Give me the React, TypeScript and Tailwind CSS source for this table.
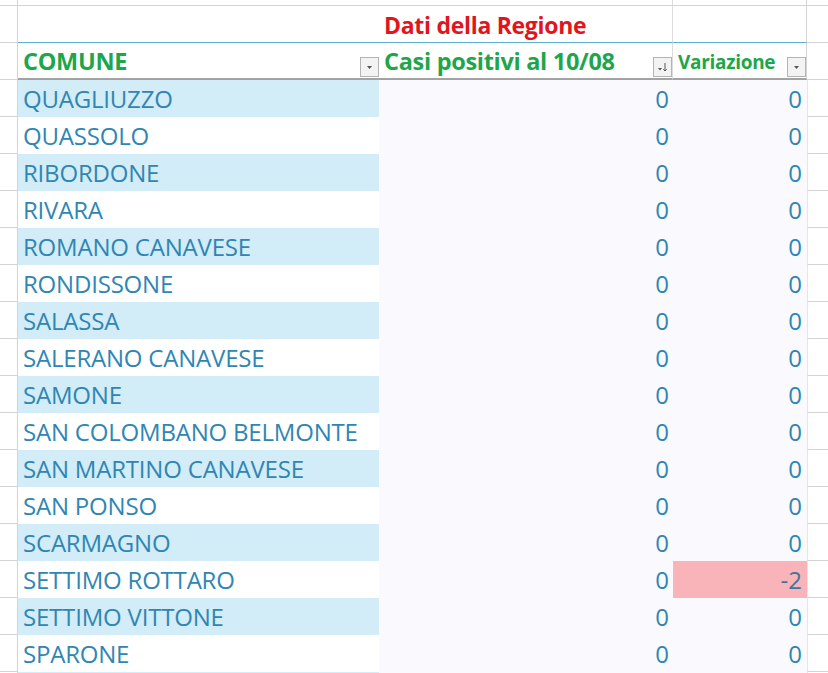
import React from "react";

const comuni = [
  "QUAGLIUZZO",
  "QUASSOLO",
  "RIBORDONE",
  "RIVARA",
  "ROMANO CANAVESE",
  "RONDISSONE",
  "SALASSA",
  "SALERANO CANAVESE",
  "SAMONE",
  "SAN COLOMBANO BELMONTE",
  "SAN MARTINO CANAVESE",
  "SAN PONSO",
  "SCARMAGNO",
  "SETTIMO ROTTARO",
  "SETTIMO VITTONE",
  "SPARONE",
];

const variazioni: Record<string, number> = { "SETTIMO ROTTARO": -2 };

function FilterButton({ sort }: { sort?: boolean }) {
  return (
    <div className="self-end w-[19px] h-[20px] mb-[1px] border border-[#b4b4b4] bg-[#f3f3f3] flex items-center justify-center shrink-0">
      <svg width="13" height="12" viewBox="0 0 13 12">
        {sort ? (
          <>
            <path d="M2 7h4l-2 2.5z" fill="#555" />
            <path d="M9 2v8M7.3 8.3L9 10l1.7-1.7" stroke="#555" strokeWidth="1" fill="none" />
          </>
        ) : (
          <path d="M4 5h5l-2.5 3z" fill="#555" />
        )}
      </svg>
    </div>
  );
}

export default function App() {
  return (
    <div className="w-[828px] h-[673px] overflow-hidden bg-white" style={{ fontFamily: '"Open Sans", "Noto Sans", sans-serif' }}>
      {/* strip above row 1 */}
      <div className="flex h-[6px] border-b border-[#d4d4d4]">
        <div className="w-[18px] border-r border-[#d4d4d4]" />
        <div className="w-[361px]" />
        <div className="w-[294px] border-r border-[#dcdcdc]" />
        <div className="w-[134px] border-r border-[#d4d4d4]" />
        <div className="flex-1" />
      </div>

      {/* row 1 - region title */}
      <div className="flex h-[37px]">
        <div className="w-[18px] border-r border-b border-[#d4d4d4]" />
        <div className="w-[361px] border-b border-[#5eb0d0]" />
        <div className="w-[294px] border-r border-[#dcdcdc] border-b border-b-[#5eb0d0] flex items-center pl-[5px] pt-[3px]">
          <span className="text-[23px] font-bold text-[#e3141b] tracking-[-0.3px]">Dati della Regione</span>
        </div>
        <div className="w-[134px] border-r border-[#d4d4d4] border-b border-b-[#5eb0d0]" />
        <div className="flex-1 border-b border-[#d4d4d4]" />
      </div>

      {/* row 2 - header */}
      <div className="flex h-[37px]">
        <div className="w-[18px] border-r border-b border-[#d4d4d4]" />
        <div className="w-[361px] border-b-2 border-[#a3a3a3] flex items-center justify-between pl-[5px]">
          <span className="text-[23.5px] font-bold text-[#1ea64b] tracking-[-0.3px] leading-none mt-[2px]">COMUNE</span>
          <FilterButton />
        </div>
        <div className="w-[294px] border-r border-[#dcdcdc] border-b-2 border-b-[#a3a3a3] flex items-center justify-between pl-[5px]">
          <span className="text-[23.5px] font-bold text-[#1ea64b] tracking-[-0.3px] leading-none mt-[2px]">Casi positivi al 10/08</span>
          <FilterButton sort />
        </div>
        <div className="w-[134px] border-r border-[#d4d4d4] border-b-2 border-b-[#a3a3a3] flex items-center justify-between pl-[5px]">
          <span className="text-[19px] font-bold text-[#1ea64b] tracking-[-0.3px] leading-none mt-[4px]">Variazione</span>
          <FilterButton />
        </div>
        <div className="flex-1 border-b border-[#d4d4d4]" />
      </div>

      {/* data rows */}
      {comuni.map((c, i) => {
        const v = variazioni[c] ?? 0;
        return (
          <div key={c} className="flex h-[37px] text-[24px] text-[#2f86b3]">
            <div className="w-[18px] border-r border-b border-[#d4d4d4]" />
            <div className={`w-[361px] flex items-center pl-[5px] tracking-[-0.2px] pt-[1px] ${i % 2 === 0 ? "bg-[#d2ecf8]" : "bg-white"}`}>
              {c}
            </div>
            <div className="w-[294px] bg-[#fafafe] flex items-center justify-end pr-[4px] pt-[1px]">0</div>
            <div className={`w-[134px] flex items-center justify-end pr-[5px] pt-[1px] ${v !== 0 ? "bg-[#f8b4b9] text-[#3f7598]" : "bg-[#fafafe]"}`}>
              {v}
            </div>
            <div className="flex-1 border-b border-[#d4d4d4] border-l border-l-[#e6e6e6]" />
          </div>
        );
      })}

      {/* partially visible next row */}
      <div className="flex h-[37px]">
        <div className="w-[18px] border-r border-[#d4d4d4]" />
        <div className="w-[361px] bg-[#d2ecf8]" />
        <div className="w-[294px] bg-[#fafafe]" />
        <div className="w-[134px] bg-[#fafafe]" />
        <div className="flex-1 border-l border-[#e6e6e6]" />
      </div>
    </div>
  );
}
